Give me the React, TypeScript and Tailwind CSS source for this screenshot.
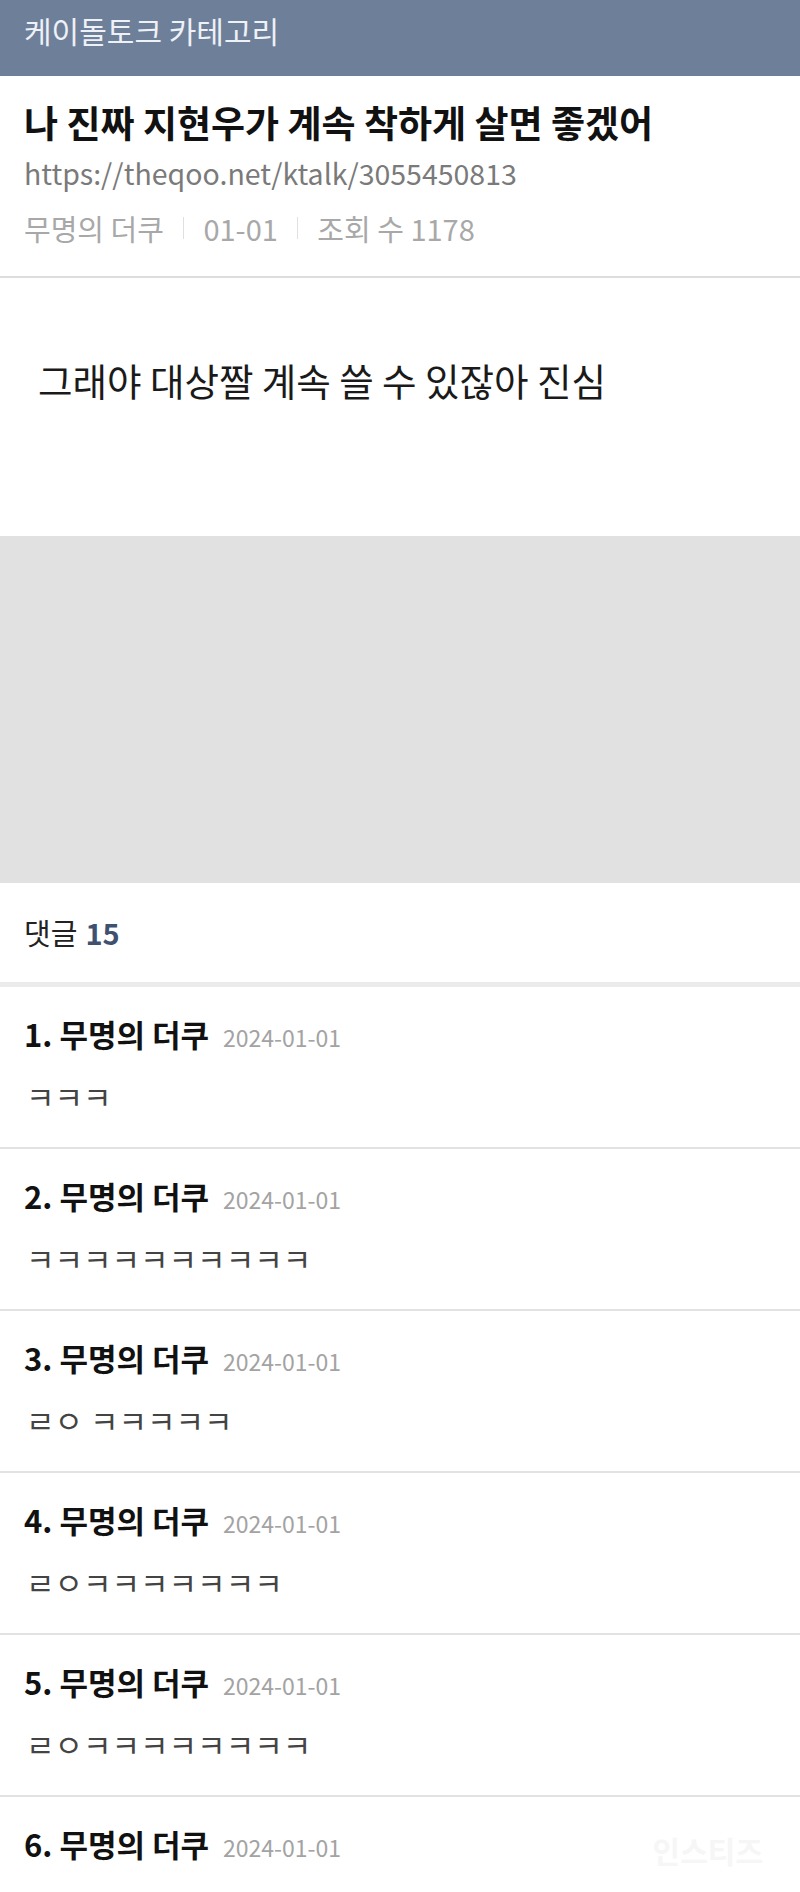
import React from 'react';

const font = { fontFamily: '"Noto Sans CJK KR", "Noto Sans", sans-serif' };

const comments = [
  { no: 1, text: 'ㅋㅋㅋ' },
  { no: 2, text: 'ㅋㅋㅋㅋㅋㅋㅋㅋㅋㅋ' },
  { no: 3, text: 'ㄹㅇ ㅋㅋㅋㅋㅋ' },
  { no: 4, text: 'ㄹㅇㅋㅋㅋㅋㅋㅋㅋ' },
  { no: 5, text: 'ㄹㅇㅋㅋㅋㅋㅋㅋㅋㅋ' },
  { no: 6, text: '' },
];

const Comment: React.FC<{ no: number; text: string; last?: boolean }> = ({ no, text, last }) => (
  <div className={last ? '' : 'border-b-2 border-[#e2e2e2]'}>
    <div className="h-[160px] px-6 pt-[27px]">
      <div className="flex items-baseline gap-[14px] leading-[40px]">
        <span className="text-[31px] font-bold text-[#111]">{no}. 무명의 더쿠</span>
        <span className="text-[23px] text-[#a3a3a3]">2024-01-01</span>
      </div>
      {text && <p className="mt-[19px] pl-[2px] text-[31px] leading-[40px] text-[#444]">{text}</p>}
    </div>
  </div>
);

const Sep = () => <span className="mx-[19px] inline-block h-[22px] w-[1.5px] bg-[#e0e0e0]" />;

export default function App() {
  return (
    <div className="relative h-[1892px] w-[800px] overflow-hidden bg-white" style={font}>
      <header className="h-[76px] bg-[#6e7f9a] px-6 pt-[11px]">
        <h2 className="text-[30px] leading-[38px] text-[#eef1f6]">케이돌토크 카테고리</h2>
      </header>

      <section className="border-b-2 border-[#dddddd] px-6 pb-[28px] pt-[21px]">
        <h1 className="text-[37px] font-bold leading-[50px] text-[#111]">나 진짜 지현우가 계속 착하게 살면 좋겠어</h1>
        <p className="mt-[6px] text-[28.5px] leading-[40px] text-[#7a7a7a]">https://theqoo.net/ktalk/3055450813</p>
        <div className="mt-[15px] flex items-center text-[29px] leading-[40px] text-[#a8a8a8]">
          <span>무명의 더쿠</span>
          <Sep />
          <span>01-01</span>
          <Sep />
          <span>조회 수 1178</span>
        </div>
      </section>

      <section className="h-[258px] px-[38px] pt-[77px]">
        <p className="text-[37.5px] leading-[50px] text-[#1a1a1a]">그래야 대상짤 계속 쓸 수 있잖아 진심</p>
      </section>

      <div className="h-[347px] bg-[#e1e1e1]" />

      <div className="flex h-[99px] items-center px-6 text-[29px]">
        <span className="text-[#222]">댓글</span>
        <span className="ml-[8px] font-bold text-[#3f5170]">15</span>
      </div>
      <div className="h-[5px] bg-[#ebebeb]" />

      {comments.map((c, i) => (
        <Comment key={c.no} no={c.no} text={c.text} last={i === comments.length - 1} />
      ))}

      <span className="absolute bottom-[22px] right-[37px] text-[30px] font-bold leading-[40px] text-[#f6f6f6]">인스티즈</span>
    </div>
  );
}
